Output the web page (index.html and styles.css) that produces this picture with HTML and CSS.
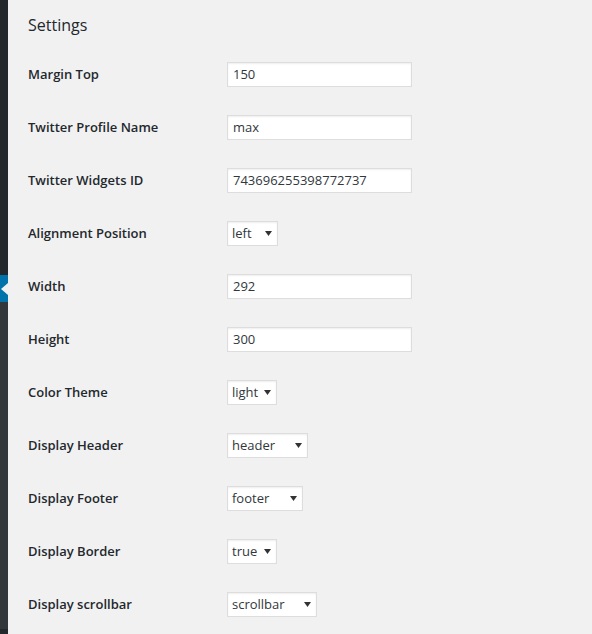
FILE: index.html
```html
<!DOCTYPE html>
<html>
<head>
<meta charset="utf-8">
<link rel="stylesheet" href="styles.css">
</head>
<body>
<div class="page">
  <div class="sidebar">
    <div class="sb-top"></div>
    <div class="sb-current"><span class="sb-arrow"></span></div>
    <div class="sb-sub"></div>
    <div class="sb-bottom"></div>
  </div>
  <div class="main">
    <h2 class="title">Settings</h2>
    <div class="form">
      <div class="row"><div class="label">Margin Top</div><div class="field"><div class="input">150</div></div></div>
      <div class="row"><div class="label">Twitter Profile Name</div><div class="field"><div class="input">max</div></div></div>
      <div class="row"><div class="label">Twitter Widgets ID</div><div class="field"><div class="input">743696255398772737</div></div></div>
      <div class="row"><div class="label">Alignment Position</div><div class="field"><div class="select w-left"><span>left</span><svg class="caret" width="7" height="5" viewBox="0 0 7 5"><path d="M0 0H7L3.5 5Z" fill="#333"/></svg></div></div></div>
      <div class="row"><div class="label">Width</div><div class="field"><div class="input">292</div></div></div>
      <div class="row"><div class="label">Height</div><div class="field"><div class="input">300</div></div></div>
      <div class="row"><div class="label">Color Theme</div><div class="field"><div class="select w-light"><span>light</span><svg class="caret" width="7" height="5" viewBox="0 0 7 5"><path d="M0 0H7L3.5 5Z" fill="#333"/></svg></div></div></div>
      <div class="row"><div class="label">Display Header</div><div class="field"><div class="select w-header"><span>header</span><svg class="caret" width="7" height="5" viewBox="0 0 7 5"><path d="M0 0H7L3.5 5Z" fill="#333"/></svg></div></div></div>
      <div class="row"><div class="label">Display Footer</div><div class="field"><div class="select w-footer"><span>footer</span><svg class="caret" width="7" height="5" viewBox="0 0 7 5"><path d="M0 0H7L3.5 5Z" fill="#333"/></svg></div></div></div>
      <div class="row"><div class="label">Display Border</div><div class="field"><div class="select w-true"><span>true</span><svg class="caret" width="7" height="5" viewBox="0 0 7 5"><path d="M0 0H7L3.5 5Z" fill="#333"/></svg></div></div></div>
      <div class="row"><div class="label">Display scrollbar</div><div class="field"><div class="select w-scroll"><span>scrollbar</span><svg class="caret" width="7" height="5" viewBox="0 0 7 5"><path d="M0 0H7L3.5 5Z" fill="#333"/></svg></div></div></div>
    </div>
  </div>
</div>
</body>
</html>
```
FILE: styles.css
```css
* { box-sizing: border-box; }
html, body { margin: 0; padding: 0; }
body {
  background: #f1f1f1;
  font-family: "Open Sans", "Noto Sans", sans-serif;
  color: #23282d;
  width: 592px;
  height: 634px;
  overflow: hidden;
}
.page {
  display: flex;
  height: 634px;
}
.sidebar {
  width: 8px;
  flex: none;
  display: flex;
  flex-direction: column;
}
.sb-top { height: 275px; background: #23282d; }
.sb-current {
  height: 27px;
  background: #0073aa;
  display: flex;
  align-items: center;
  justify-content: flex-end;
}
.sb-arrow {
  width: 0;
  height: 0;
  border-top: 6px solid transparent;
  border-bottom: 6px solid transparent;
  border-right: 7px solid #f1f1f1;
}
.sb-sub { height: 327px; background: #32373c; }
.sb-bottom { flex: 1; background: #23282d; }

.main {
  flex: 1;
  padding-left: 20px;
}
.title {
  margin: 0;
  padding-top: 14px;
  height: 48px;
  font-size: 16px;
  font-weight: 400;
  line-height: 23px;
  color: #23282d;
}
.form {
  display: flex;
  flex-direction: column;
}
.row {
  height: 53px;
  display: flex;
  align-items: center;
}
.label {
  width: 199px;
  flex: none;
  font-size: 13px;
  font-weight: 600;
  color: #23282d;
  padding-bottom: 2px;
}
.field { display: flex; align-items: center; }
.input {
  width: 185px;
  height: 25px;
  border: 1px solid #ddd;
  background: #fff;
  box-shadow: inset 0 1px 2px rgba(0,0,0,.07);
  padding: 0 5px;
  font-size: 13px;
  line-height: 23px;
  color: #32373c;
}
.select {
  height: 25px;
  border: 1px solid #ddd;
  background: #fff;
  box-shadow: inset 0 1px 2px rgba(0,0,0,.07);
  padding: 0 5px 0 4px;
  font-size: 13px;
  line-height: 23px;
  color: #32373c;
  display: flex;
  align-items: center;
  justify-content: space-between;
}
.caret { flex: none; }
.w-left { width: 51px; }
.w-light { width: 50px; }
.w-header { width: 81px; }
.w-footer { width: 76px; }
.w-true { width: 50px; }
.w-scroll { width: 90px; }
```
